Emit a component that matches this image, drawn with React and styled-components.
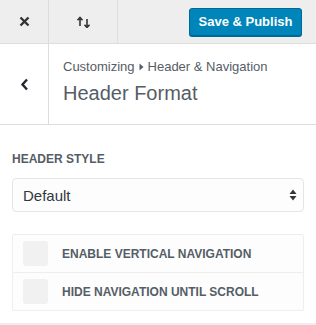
import React, { useState } from 'react';
import styled, { createGlobalStyle } from 'styled-components';

const GlobalStyle = createGlobalStyle`
  body {
    margin: 0;
    background: #eeeeee;
    font-family: "Liberation Sans", Arial, sans-serif;
  }
`;

const Page = styled.div`
  width: 316px;
  display: flex;
  flex-direction: column;
`;

const TopBar = styled.div`
  height: 43px;
  display: flex;
  align-items: stretch;
  background: #eeeeee;
  border-bottom: 1px solid #dddddd;
`;

const BarButton = styled.div`
  width: ${({ w }) => w}px;
  display: flex;
  align-items: center;
  justify-content: center;
  border-right: 1px solid #dddddd;
  color: #333;
`;

const Spacer = styled.div`
  flex: 1;
`;

const SaveButton = styled.button`
  align-self: center;
  margin-right: 14px;
  width: 113px;
  height: 28px;
  border: 1px solid #006799;
  border-radius: 3px;
  background: #0085ba;
  color: #fff;
  font-family: "Liberation Sans", Arial, sans-serif;
  font-size: 13px;
  font-weight: 700;
  padding: 0;
  box-shadow: 0 1px 0 #006799;
`;

const Header = styled.div`
  height: 80px;
  display: flex;
  background: #fff;
  border-bottom: 1px solid #dddddd;
`;

const TitleBlock = styled.div`
  padding: 14px 0 0 14px;
  display: flex;
  flex-direction: column;
  color: #555d66;
`;

const Crumb = styled.div`
  font-size: 13px;
  line-height: 17px;
  display: flex;
  align-items: center;
  gap: 4px;
`;

const Title = styled.div`
  font-size: 20px;
  line-height: 26px;
  margin-top: 5px;
`;

const Content = styled.div`
  background: #fff;
  padding: 26px 12px 12px;
  display: flex;
  flex-direction: column;
`;

const Label = styled.div`
  font-size: 12px;
  line-height: 16px;
  font-weight: 700;
  color: #555d66;
  margin-bottom: 11px;
`;

const SelectBox = styled.div`
  height: 32px;
  border: 1px solid #e5e5e5;
  border-radius: 4px;
  background: #fdfdfd;
  display: flex;
  align-items: center;
  justify-content: space-between;
  padding: 0 6px 0 10px;
  font-size: 15px;
  color: #32373c;
`;

const Group = styled.div`
  margin-top: 22px;
  border: 1px solid #eeeeee;
  border-radius: 2px;
  background: #fdfdfd;
`;

const Row = styled.div`
  height: 37px;
  display: flex;
  align-items: center;
  padding-left: 10px;
  gap: 14px;
  border-top: ${({ first }) => (first ? 'none' : '1px solid #eeeeee')};
  font-size: 12px;
  font-weight: 700;
  color: #555d66;
`;

const Check = styled.div`
  width: 25px;
  height: 25px;
  border-radius: 3px;
  background: ${({ on }) => (on ? '#0085ba' : '#f1f1f1')};
`;

const options = ['Enable vertical navigation', 'Hide navigation until scroll'];

export default function App() {
  const [checked, setChecked] = useState([false, false]);
  return (
    <Page>
      <GlobalStyle />
      <TopBar>
        <BarButton w={48}>
          <svg width="11" height="11" viewBox="0 0 11 11">
            <path d="M1.5 1.5l8 8M9.5 1.5l-8 8" stroke="#333" strokeWidth="2.4" />
          </svg>
        </BarButton>
        <BarButton w={68}>
          <svg width="15" height="12" viewBox="0 0 15 12">
            <path d="M4 10V2M1.5 4.2L4 1.5l2.5 2.7" stroke="#333" strokeWidth="1.6" fill="none" />
            <path d="M11 3v8M8.5 8.8L11 11.5l2.5-2.7" stroke="#333" strokeWidth="1.6" fill="none" />
          </svg>
        </BarButton>
        <Spacer />
        <SaveButton>Save &amp; Publish</SaveButton>
      </TopBar>
      <Header>
        <BarButton w={48}>
          <svg width="9" height="13" viewBox="0 0 9 13">
            <path d="M7 1.5L2.5 6.5 7 11.5" stroke="#23282d" strokeWidth="2.4" fill="none" />
          </svg>
        </BarButton>
        <TitleBlock>
          <Crumb>
            Customizing
            <svg width="5" height="8" viewBox="0 0 5 8">
              <path d="M0.5 0.5L4.5 4 0.5 7.5z" fill="#555d66" />
            </svg>
            Header &amp; Navigation
          </Crumb>
          <Title>Header Format</Title>
        </TitleBlock>
      </Header>
      <Content>
        <Label>HEADER STYLE</Label>
        <SelectBox>
          Default
          <svg width="8" height="12" viewBox="0 0 8 12">
            <path d="M4 0.5L7.5 5H0.5z" fill="#32373c" />
            <path d="M4 11.5L7.5 7H0.5z" fill="#32373c" />
          </svg>
        </SelectBox>
        <Group>
          {options.map((o, i) => (
            <Row
              key={o}
              first={i === 0}
              onClick={() => setChecked(checked.map((c, j) => (j === i ? !c : c)))}
            >
              <Check on={checked[i]} />
              {o.toUpperCase()}
            </Row>
          ))}
        </Group>
      </Content>
    </Page>
  );
}
